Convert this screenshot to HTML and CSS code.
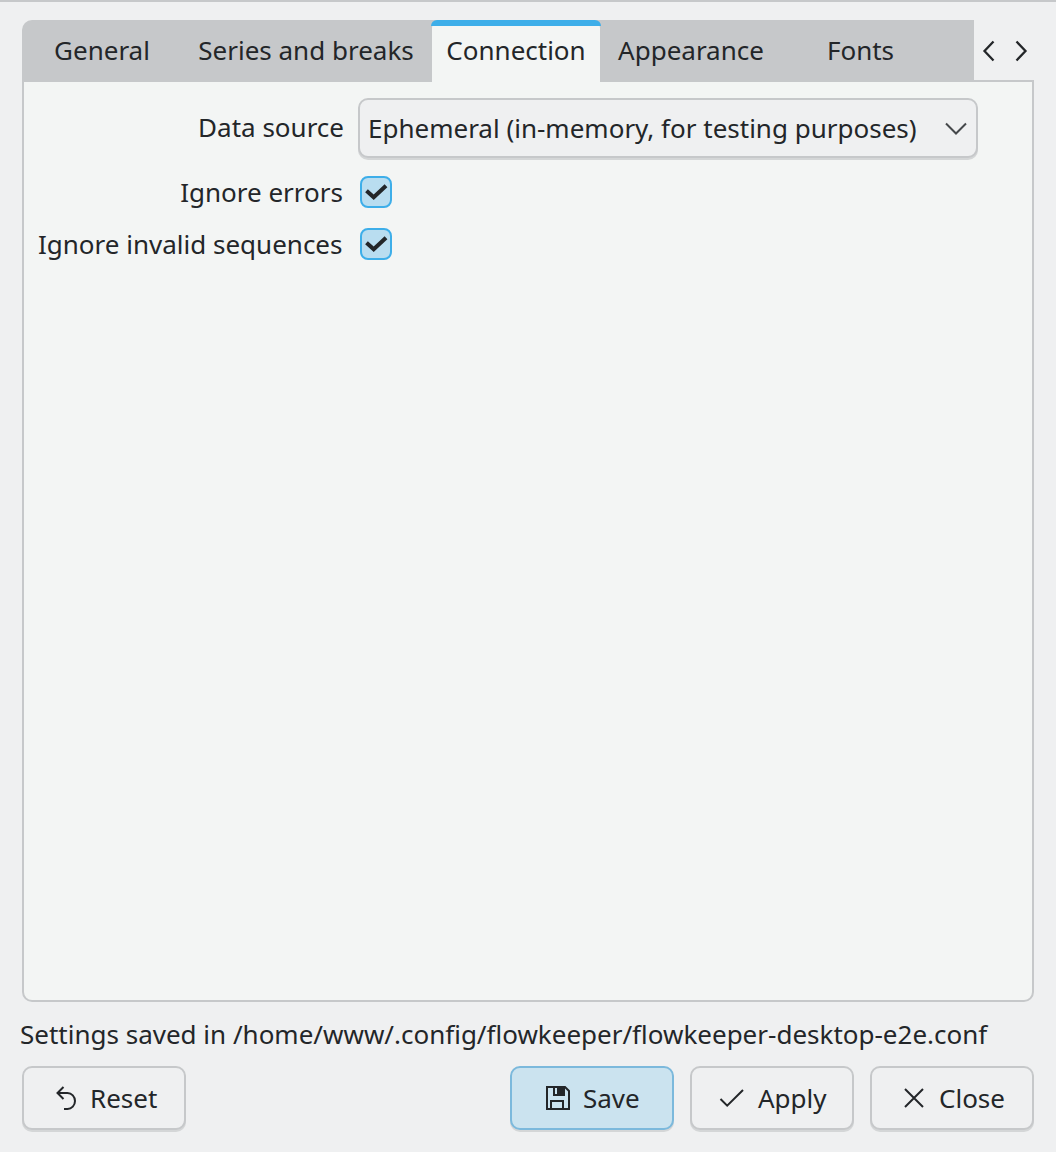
FILE: index.html
```html
<!DOCTYPE html>
<html lang="en">
<head>
<meta charset="utf-8">
<title>Settings</title>
<link rel="stylesheet" href="styles.css">
</head>
<body>
<main class="dialog">
  <div class="tab-row">
    <nav class="tabs">
      <div class="tab tab-general"><span>General</span></div>
      <div class="tab tab-series"><span>Series and breaks</span></div>
      <div class="tab tab-active"><span>Connection</span></div>
      <div class="tab tab-appearance"><span>Appearance</span></div>
      <div class="tab tab-fonts"><span>Fonts</span></div>
    </nav>
    <div class="scrollers">
      <svg width="16" height="24" viewBox="0 0 16 24"><path d="M12.500 2.500 3.500 12 12.500 21.500"/></svg>
      <svg width="16" height="24" viewBox="0 0 16 24"><path d="M3.500 2.500 12.500 12 3.500 21.500"/></svg>
    </div>
  </div>
  <section class="pane">
    <div class="row row-source">
      <span class="label">Data source</span>
      <div class="combo">
        <span>Ephemeral (in-memory, for testing purposes)</span>
        <svg width="22" height="14" viewBox="0 0 22 14"><path d="M1 2.500 11 12.500 21 2.500"/></svg>
      </div>
    </div>
    <div class="row row-errors">
      <span class="label">Ignore errors</span>
      <span class="check"><svg width="28" height="28" viewBox="0 0 28 28"><path d="M4.500 12.700 11.700 19.300 24 7.700"/></svg></span>
    </div>
    <div class="row">
      <span class="label">Ignore invalid sequences</span>
      <span class="check"><svg width="28" height="28" viewBox="0 0 28 28"><path d="M4.500 12.700 11.700 19.300 24 7.700"/></svg></span>
    </div>
  </section>
  <p class="status">Settings saved in /home/www/.config/flowkeeper/flowkeeper-desktop-e2e.conf</p>
  <footer class="buttons">
    <div class="button reset">
      <svg width="32" height="32" viewBox="0 0 32 32"><path d="M13.500 5 7.500 11 13.500 17M7.500 11H17.500A7.500 8 0 0 1 17.500 27H14"/></svg>
      <span>Reset</span>
    </div>
    <div class="button primary">
      <svg width="32" height="32" viewBox="0 0 32 32"><path d="M5 5H23L27 9V27H5ZM9 27V19H21V27M12 5V13H22V5"/><path class="solid" d="M16 5H22V13H16Z"/></svg>
      <span>Save</span>
    </div>
    <div class="button apply">
      <svg width="32" height="32" viewBox="0 0 32 32"><path d="M4.500 17 11.200 23.700 27 8"/></svg>
      <span>Apply</span>
    </div>
    <div class="button close">
      <svg width="32" height="32" viewBox="0 0 32 32"><path d="M7 7 25 25M25 7 7 25"/></svg>
      <span>Close</span>
    </div>
  </footer>
</main>
</body>
</html>
```
FILE: styles.css
```css
* { box-sizing: border-box; }

body {
  margin: 0;
  background: #eff0f1;
  color: #232629;
  font: 26px/36px "Noto Sans", sans-serif;
}

svg {
  display: block;
  flex: none;
  fill: none;
  stroke: #232629;
  stroke-width: 2;
}

.dialog {
  height: 1152px;
  padding: 18px 22px 20px;
  border-top: 2px solid #c6c8ca;
  display: flex;
  flex-direction: column;
}

.tab-row {
  display: flex;
  height: 62px;
  flex: none;
  position: relative;
  z-index: 1;
}

.tabs {
  display: flex;
  width: 952px;
  height: 62px;
  background: #c6c8ca;
  border-radius: 10px 0 0 0;
}

.tab {
  padding-top: 12px;
  text-align: center;
  white-space: nowrap;
}

.tab-general { width: 160px; }
.tab-series { width: 250px; padding-right: 2px; }
.tab-active {
  position: relative;
  width: 168px;
  background: #f3f5f4;
  border-radius: 8px 8px 0 0;
}
.tab-active::before {
  content: "";
  position: absolute;
  top: 0;
  left: -1px;
  right: -1px;
  height: 6px;
  background: #3daee9;
  border-radius: 8px 8px 0 0;
}
.tab-appearance { width: 182px; }
.tab-fonts { width: 157px; }

.scrollers {
  display: flex;
  gap: 16px;
  padding: 19px 0 0 7px;
}

.scrollers svg { stroke-width: 2.3; }

.pane {
  height: 922px;
  margin-top: -2px;
  flex: none;
  padding: 16px 0 0 14px;
  background: #f3f5f4;
  border: 2px solid #c6c8ca;
  border-radius: 0 0 10px 10px;
}

.row {
  display: flex;
  gap: 18px;
  align-items: center;
  height: 32px;
  margin-bottom: 20px;
}

.label {
  width: 304px;
  text-align: right;
  white-space: nowrap;
}

.row-source { height: 60px; gap: 14px; margin-bottom: 18px; }
.row-source .label { width: 306px; padding-bottom: 2px; }

.row-errors { gap: 17px; }
.row-errors .label { width: 305px; }

.combo {
  display: flex;
  align-items: center;
  justify-content: space-between;
  width: 620px;
  height: 60px;
  padding: 0 9px 0 8px;
  background: #eff0f1;
  border: 2px solid #c6c8ca;
  border-radius: 10px;
  box-shadow: 0 2px 0 #d4d6d7;
  white-space: nowrap;
}

.combo svg { stroke: #45484b; }

.check {
  width: 32px;
  height: 32px;
  background: #b9ddf0;
  border: 2px solid #3daee9;
  border-radius: 8px;
}

.check svg { stroke-width: 4; }

.status {
  margin: 14px 0 14px -2px;
  white-space: nowrap;
}

.buttons { display: flex; gap: 16px; }

.button {
  display: flex;
  align-items: center;
  gap: 9px;
  width: 164px;
  height: 64px;
  padding-left: 26px;
  background: #eff0f1;
  border: 2px solid #c6c8ca;
  border-radius: 10px;
  box-shadow: 0 2px 0 #d4d6d7;
}

.button span { padding-bottom: 1px; }

.reset { gap: 8px; margin-right: auto; }
.primary { padding-left: 30px; background: #cbe3ef; border-color: #7cb9dc; }
.apply { gap: 10px; padding-left: 24px; }
.solid { fill: #232629; }
```
